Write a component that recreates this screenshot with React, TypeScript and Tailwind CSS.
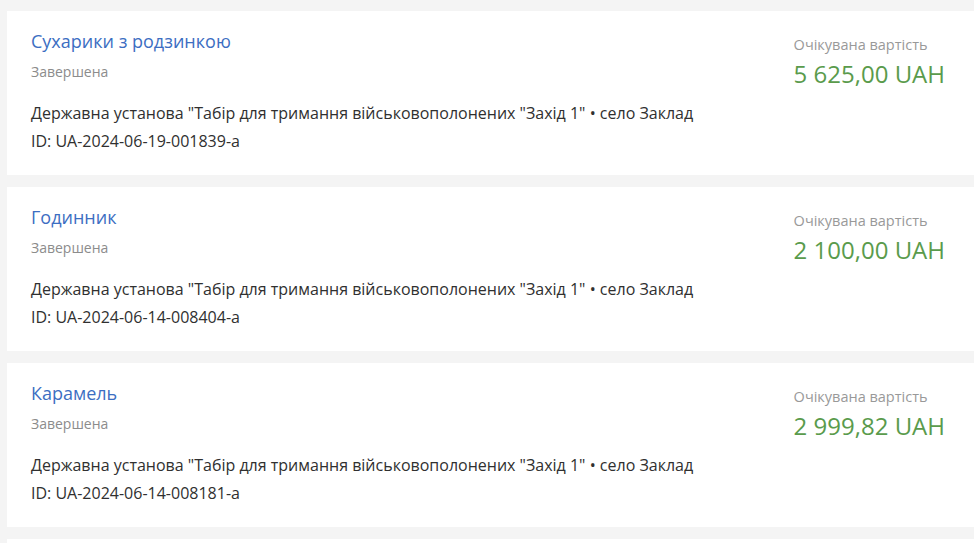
const items = [
  { title: 'Сухарики з родзинкою', id: 'UA-2024-06-19-001839-a', price: '5 625,00 UAH' },
  { title: 'Годинник', id: 'UA-2024-06-14-008404-a', price: '2 100,00 UAH' },
  { title: 'Карамель', id: 'UA-2024-06-14-008181-a', price: '2 999,82 UAH' },
];

export default function App() {
  return (
    <div
      className="h-[543px] w-[974px] overflow-hidden bg-[#f4f4f4] pl-[7px] pt-[11px]"
      style={{ fontFamily: '"Open Sans", "Noto Sans", sans-serif' }}
    >
      <div className="flex flex-col gap-3">
        {items.map(item => (
          <div key={item.id} className="flex h-[164px] justify-between bg-white pl-6 pr-[29px] pt-[18px]">
            <div className="flex flex-col">
              <div className="text-[18px] leading-6 text-[#3c6ec2]">{item.title}</div>
              <div className="mt-[9px] text-[14px] leading-5 text-[#8c8c8c]">Завершена</div>
              <div className="mt-[17px] text-[16px] leading-7 text-[#303030]">
                Державна установа "Табір для тримання військовополонених "Захід 1" • село Заклад
              </div>
              <div className="text-[16px] leading-7 text-[#303030]">ID: {item.id}</div>
            </div>
            <div className="flex flex-col pt-[6px]">
              <div className="text-[14.5px] leading-5 text-[#999]">Очікувана вартість</div>
              <div className="mt-[3px] text-[24px] leading-8 text-[#5a9b4c]">{item.price}</div>
            </div>
          </div>
        ))}
        <div className="h-[40px] bg-white" />
      </div>
    </div>
  );
}
